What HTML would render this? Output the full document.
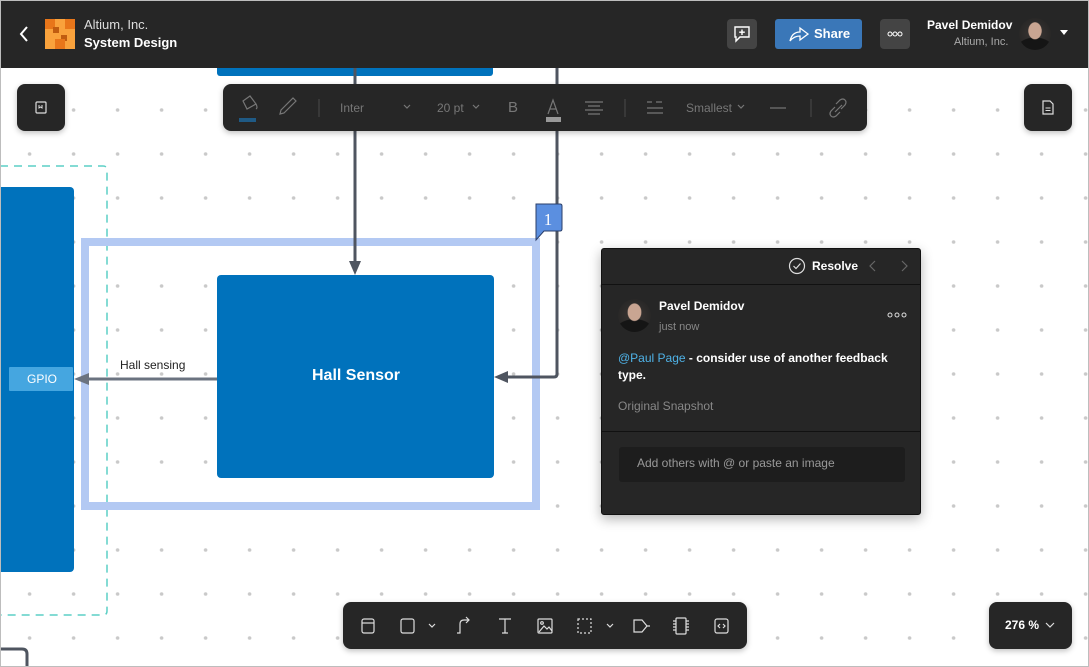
<!DOCTYPE html>
<html><head><meta charset="utf-8"><style>
*{margin:0;padding:0;box-sizing:border-box}
body{width:1089px;height:667px;overflow:hidden;font-family:"Liberation Sans",sans-serif;background:#fff;position:relative}
.frame{position:absolute;inset:0;border:1px solid #bdbdbd;pointer-events:none;z-index:50}
.hdr{position:absolute;left:0;top:0;width:1089px;height:68px;background:#262626;z-index:10}
.abs{position:absolute}
.dk{background:#262626;border-radius:8px;box-shadow:0 2px 6px rgba(0,0,0,.25)}
.t{color:#fff;white-space:nowrap}
.av{border-radius:50%;background:radial-gradient(ellipse 22% 28% at 50% 40%,#c9a592 0 90%,transparent 100%),radial-gradient(ellipse 60% 40% at 50% 100%,#151515 0 95%,transparent 100%),radial-gradient(circle at 50% 50%,#3a3634,#222)}
</style></head><body>
<svg class="abs" style="left:0;top:0" width="1089" height="667">
<defs><pattern id="d" x="7.6" y="88" width="44" height="44" patternUnits="userSpaceOnUse"><circle cx="22" cy="22" r="1.8" fill="#c9c9c9"/></pattern></defs>
<rect width="1089" height="667" fill="url(#d)"/>
<rect x="217" y="60" width="276" height="16" rx="3" fill="#0072bc"/>
<rect x="-10" y="187" width="84" height="385" rx="4" fill="#0072bc"/>
<path d="M0 166 H103 Q107 166 107 170 V611 Q107 615 103 615 H0" fill="none" stroke="#5ccfc5" stroke-width="1.5" stroke-dasharray="8 6"/>
<rect x="85" y="242" width="451" height="264" fill="none" stroke="#b3c9f3" stroke-width="8"/>
<line x1="355" y1="68" x2="355" y2="262" stroke="#4f5560" stroke-width="3"/>
<polygon points="349,261 361,261 355,275" fill="#4f5560"/>
<path d="M557 68 V374 Q557 377 554 377 H507" fill="none" stroke="#4f5560" stroke-width="3"/>
<polygon points="508,371 508,383 494,377" fill="#4f5560"/>
<line x1="217" y1="379" x2="88" y2="379" stroke="#6b7380" stroke-width="3"/>
<polygon points="89,373 89,385 74,379" fill="#6b7380"/>
<rect x="217" y="275" width="277" height="203" rx="4" fill="#0072bc"/>
<rect x="9" y="367" width="64" height="24" rx="1" fill="#45a6e0"/>
<path d="M536 204 H560 Q562 204 562 206 V229 Q562 231 560 231 H544 L536 240 Z" fill="#5b8fe0" stroke="#2b3f6a" stroke-width="1"/>
<text x="548" y="225" fill="#fff" font-family="Liberation Serif" font-size="17" text-anchor="middle">1</text>
<path d="M0 649 H22 Q27 649 27 654 V667" fill="none" stroke="#4f5560" stroke-width="3"/>
</svg>
<div class="abs t" style="left:312px;top:367px;font-weight:bold;font-size:16px">Hall Sensor</div>
<div class="abs t" style="left:27px;top:372px;font-size:12px">GPIO</div>
<div class="abs" style="left:120px;top:358px;font-size:12px;color:#222">Hall sensing</div>

<div class="hdr">
<svg class="abs" style="left:18px;top:25px" width="12" height="18"><path d="M9 2 L3 9 L9 16" fill="none" stroke="#fff" stroke-width="2"/></svg>
<svg class="abs" style="left:45px;top:19px" width="30" height="30">
<rect width="30" height="30" fill="#f9a23c"/>
<rect x="0" y="0" width="10" height="10" fill="#e8761a"/><rect x="20" y="0" width="10" height="10" fill="#e8761a"/><rect x="10" y="10" width="10" height="10" fill="#f9a23c"/>
<rect x="8" y="8" width="6" height="6" fill="#c05c10"/><rect x="16" y="16" width="6" height="6" fill="#c05c10"/><rect x="10" y="20" width="10" height="10" fill="#e8761a"/></svg>
<div class="abs t" style="left:84px;top:17px;font-size:13px;color:#ddd">Altium, Inc.</div>
<div class="abs t" style="left:84px;top:35px;font-size:13px;font-weight:bold">System Design</div>
<div class="abs" style="left:727px;top:19px;width:30px;height:30px;background:#444;border-radius:4px"></div>
<svg class="abs" style="left:733px;top:25px" width="18" height="18"><path d="M2 2 H16 V12 H7 L3 16 V12 H2 Z" fill="none" stroke="#fff" stroke-width="1.4"/><path d="M9 4.5 V10 M6.2 7.2 H11.8" stroke="#fff" stroke-width="1.4"/></svg>
<div class="abs" style="left:775px;top:19px;width:87px;height:30px;background:#3a77b8;border-radius:3px"></div>
<svg class="abs" style="left:789px;top:26px" width="20" height="16"><path d="M1 15 Q3 6 11 6 V2 L19 8 L11 14 V10 Q5 10 1 15 Z" fill="none" stroke="#fff" stroke-width="1.3"/></svg>
<div class="abs t" style="left:814px;top:26px;font-size:13px;font-weight:bold">Share</div>
<div class="abs" style="left:880px;top:19px;width:30px;height:30px;background:#444;border-radius:4px"></div>
<svg class="abs" style="left:880px;top:19px" width="30" height="30" fill="none" stroke="#fff" stroke-width="1"><circle cx="10" cy="15" r="2"/><circle cx="15" cy="15" r="2"/><circle cx="20" cy="15" r="2"/></svg>
<div class="abs t" style="left:927px;top:18px;font-size:12px;font-weight:bold">Pavel Demidov</div>
<div class="abs t" style="left:954px;top:36px;font-size:11px;color:#aaa">Altium, Inc.</div>
<div class="abs av" style="left:1019px;top:18px;width:32px;height:32px"></div>
<svg class="abs" style="left:1060px;top:30px" width="9" height="6"><path d="M0 0 H8 L4 5 Z" fill="#fff"/></svg>
</div>

<div class="abs dk" style="left:17px;top:84px;width:48px;height:47px"></div>
<svg class="abs" style="left:35px;top:101px" width="13" height="13"><rect x="1" y="1" width="10" height="11" rx="1" fill="none" stroke="#ddd" stroke-width="1.2"/><path d="M4 4 V7 L5.5 6 L7 7 V4" fill="none" stroke="#ddd"/></svg>
<div class="abs dk" style="left:1024px;top:84px;width:48px;height:47px"></div>
<svg class="abs" style="left:1042px;top:100px" width="12" height="15"><path d="M1 1 H8 L11 4 V14 H1 Z" fill="none" stroke="#ddd" stroke-width="1.2"/><path d="M3.5 8 H8.5 M3.5 10.5 H8.5" stroke="#ddd"/></svg>

<div class="abs dk" style="left:223px;top:84px;width:644px;height:47px"></div>
<svg class="abs" style="left:223px;top:84px" width="644" height="47" fill="none" stroke="#777" stroke-width="1.2">
<path d="M20 17 L27 12 L33 20 L24 25 Z M33 20 q2 4 0 5"/><rect x="16" y="34" width="17" height="4" fill="#1f5a85" stroke="none"/>
<path d="M58 26 L70 14 L73 17 L61 29 L57 30 Z"/>
<line x1="96" y1="15" x2="96" y2="33" stroke="#444"/>
<path d="M181 21 l3 3 3-3"/><path d="M250 21 l3 3 3-3"/>
<path d="M325 30 L330 16 L335 30 M327 25 H333"/><rect x="323" y="33" width="15" height="5" fill="#999" stroke="none"/>
<path d="M362 18 H380 M365 22 H377 M362 26 H380 M365 30 H377"/>
<line x1="402" y1="15" x2="402" y2="33" stroke="#444"/>
<path d="M424 18 H429 M433 18 H439 M424 24 H440 M424 29 H440"/>
<path d="M515 21 l3 3 3-3"/><path d="M547 24 H563"/>
<line x1="588" y1="15" x2="588" y2="33" stroke="#444"/>
<path d="M613 20 l4-4 q3-2 5 0 q2 2 0 5 l-4 4 M617 28 l-4 4 q-3 2 -5 0 q-2 -2 0 -5 l4-4 M612 28 l7-7"/>
</svg>
<div class="abs" style="left:340px;top:101px;font-size:12px;color:#777">Inter</div>
<div class="abs" style="left:437px;top:101px;font-size:12px;color:#777">20 pt</div>
<div class="abs" style="left:508px;top:99px;font-size:15px;color:#777">B</div>
<div class="abs" style="left:686px;top:101px;font-size:12px;color:#777">Smallest</div>

<div class="abs" style="left:601px;top:248px;width:320px;height:267px;background:#262626;border:1px solid #111;border-radius:3px;box-shadow:0 4px 12px rgba(0,0,0,.3)">
<svg class="abs" style="left:186px;top:8px" width="18" height="18"><circle cx="9" cy="9" r="7.5" fill="none" stroke="#ddd" stroke-width="1.2"/><path d="M5.5 9 L8 11.5 L12.5 6.5" fill="none" stroke="#ddd" stroke-width="1.2"/></svg>
<div class="abs t" style="left:210px;top:10px;font-size:12px;font-weight:bold">Resolve</div>
<svg class="abs" style="left:265px;top:10px" width="45" height="14" fill="none" stroke="#666" stroke-width="1.2"><path d="M8 2 L3 7 L8 12"/><path d="M35 2 L40 7 L35 12"/></svg>
<div class="abs" style="left:0;top:35px;width:318px;height:1px;background:#111"></div>
<div class="abs av" style="left:16px;top:50px;width:33px;height:33px"></div>
<div class="abs t" style="left:57px;top:50px;font-size:12px;font-weight:bold">Pavel Demidov</div>
<div class="abs t" style="left:57px;top:72px;font-size:11px;color:#888">just now</div>
<svg class="abs" style="left:284px;top:62px" width="24" height="8" fill="none" stroke="#ddd" stroke-width="1"><circle cx="4" cy="4" r="2"/><circle cx="11" cy="4" r="2"/><circle cx="18" cy="4" r="2"/></svg>
<div class="abs" style="left:16px;top:101px;font-size:12px;color:#fff;font-weight:bold;line-height:17px;width:290px"><span style="color:#4fb3e8;font-weight:normal">@Paul Page</span> - consider use of another feedback type.</div>
<div class="abs t" style="left:16px;top:150px;font-size:12px;color:#888">Original Snapshot</div>
<div class="abs" style="left:0;top:182px;width:318px;height:1px;background:#111"></div>
<div class="abs" style="left:17px;top:198px;width:286px;height:35px;background:#1d1d1d;border-radius:3px"></div>
<div class="abs t" style="left:35px;top:207px;font-size:12px;color:#999">Add others with @ or paste an image</div>
</div>

<div class="abs dk" style="left:343px;top:602px;width:404px;height:47px"></div>
<svg class="abs" style="left:343px;top:602px" width="404" height="47" fill="none" stroke="#ddd" stroke-width="1.2">
<rect x="19" y="17" width="12" height="14" rx="2"/><path d="M19 21 H31"/>
<rect x="58" y="17" width="13" height="14" rx="2"/><path d="M86 22 l3 3 3-3"/>
<path d="M114 31 H117 V22 Q117 18 121 18 H126 M123 15 l3 3 -3 3"/>
<path d="M156 17 H168 M162 17 V31 M159 31 H165"/>
<rect x="195" y="17" width="14" height="14" rx="1"/><circle cx="199" cy="21" r="1.3"/><path d="M196 30 L201 24 L204 27 L206 25 L209 29"/>
<rect x="235" y="17" width="13" height="14" stroke-dasharray="2 2"/><path d="M264 22 l3 3 3-3"/>
<path d="M291 18 H299 L304 24 L299 30 H291 Z M304 24 H307"/>
<rect x="333" y="16" width="10" height="16" rx="1"/><path d="M330 19 H333 M330 22 H333 M330 25 H333 M330 28 H333 M343 19 H346 M343 22 H346 M343 25 H346 M343 28 H346"/>
<rect x="372" y="17" width="13" height="14" rx="2"/><path d="M377 22 l-2 2 2 2 M380 22 l2 2 -2 2"/>
</svg>

<div class="abs dk" style="left:989px;top:602px;width:83px;height:47px"></div>
<div class="abs t" style="left:1005px;top:618px;font-size:12px;font-weight:bold">276 %</div>
<svg class="abs" style="left:1045px;top:621px" width="10" height="8"><path d="M1 2 l4 4 4-4" fill="none" stroke="#ddd" stroke-width="1.2"/></svg>
<div class="frame"></div>
</body></html>
